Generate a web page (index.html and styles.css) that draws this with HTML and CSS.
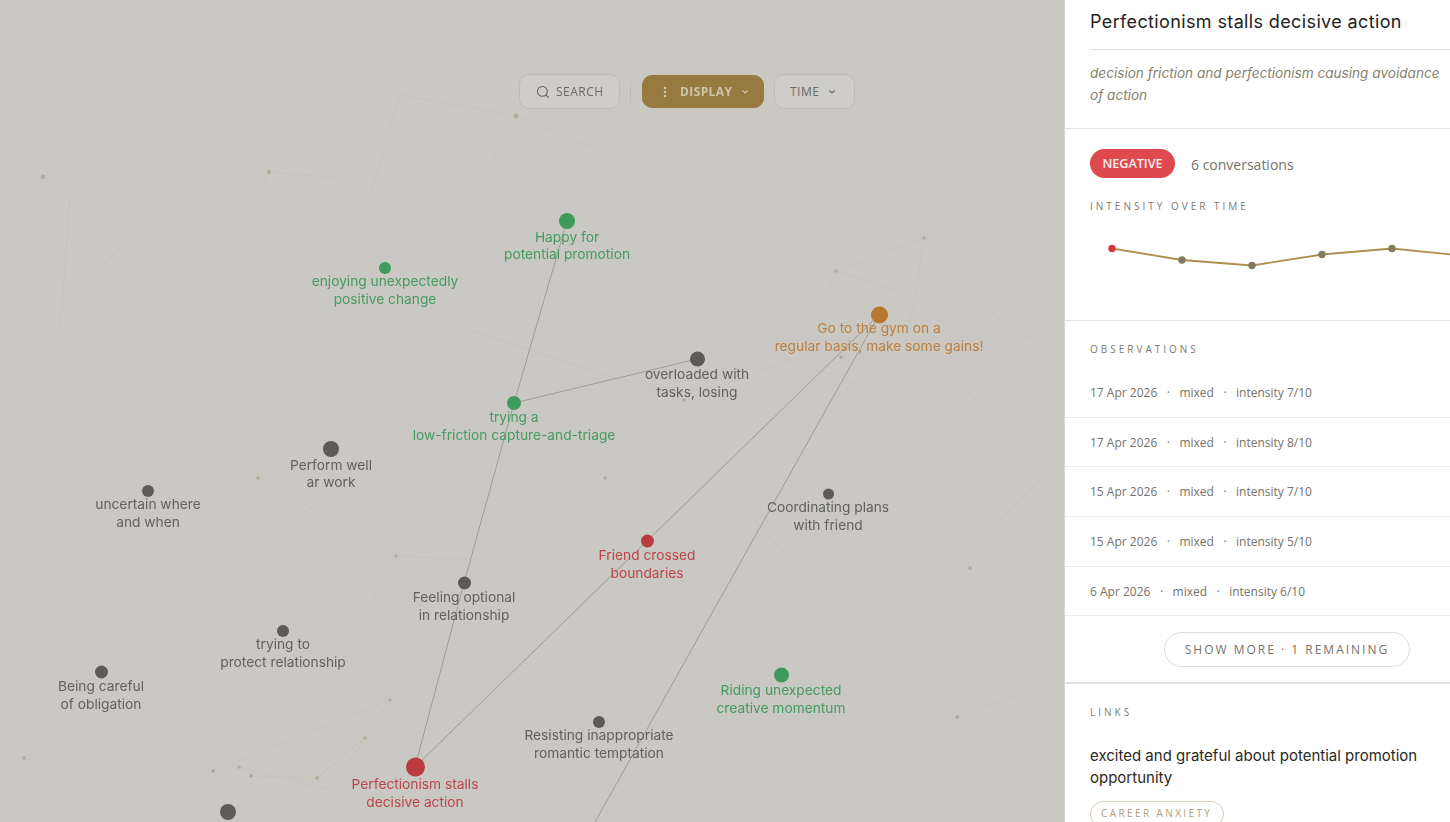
FILE: index.html
```html
<!DOCTYPE html>
<html lang="en">
<head>
<meta charset="utf-8">
<title>Perfectionism stalls decisive action</title>
<link rel="stylesheet" href="styles.css">
</head>
<body>
<div class="app">
  <main class="canvas">
    <svg class="graph" width="1064" height="822" viewBox="0 0 1064 822">
      <g class="faint">
        <path d="M43 177L120 250L60 300M43 177L170 110M269 172L340 178L372 190M269 172L262 190M269 172L180 120M516 116L470 200L400 240M516 116L600 150M516 116L400 95M400 95L372 190M70 200L60 330"/>
        <path d="M924 238L915 300L905 340M836 271L830 287M836 271L1010 330L1060 350M924 238L1000 320M836 271L924 238M924 238L880 270M905 340L1000 420L1050 470M841 357L950 430"/>
        <path d="M970 568L1000 520L1040 480M970 568L880 620M970 568L900 460M957 717L1030 690M957 717L880 770M396 556L480 560L605 478M258 478L396 556M605 478L684 400L790 360L860 385M258 478L190 430M396 556L350 640M684 400L560 360L470 330M340 380L258 478M720 480L790 560"/>
        <path d="M24 758L90 790M24 758L60 735L120 700M213 771L240 800M239 767L330 790M239 767L251 776L270 740M317 778L365 738L390 700M365 738L326 800M213 771L160 805M684 400L640 380M830 245L780 300M390 700L265 750L213 771M317 778L251 776M317 778L410 700"/>
        <path d="M630 100V222"/>
      </g>
      <g class="faint-dots">
        <circle cx="43" cy="177" r="2.200"/><circle cx="269" cy="172" r="2.200"/><circle cx="516" cy="116" r="2.400"/><circle cx="924" cy="238" r="1.800"/><circle cx="836" cy="271" r="1.800"/><circle cx="970" cy="568" r="1.800"/><circle cx="957" cy="717" r="1.800"/><circle cx="24" cy="758" r="1.800"/><circle cx="213" cy="771" r="1.800"/><circle cx="239" cy="767" r="1.800"/><circle cx="251" cy="776" r="1.800"/><circle cx="317" cy="778" r="1.800"/><circle cx="365" cy="738" r="1.800"/><circle cx="390" cy="700" r="1.800"/><circle cx="396" cy="556" r="1.800"/><circle cx="605" cy="478" r="1.800"/><circle cx="258" cy="478" r="1.800"/><circle cx="684" cy="400" r="1.800"/><circle cx="841" cy="357" r="1.800"/>
      </g>
      <g class="edges">
        <path d="M567 221L514 403L464 583L415 767"/>
        <path d="M514 403L697 359"/>
        <path d="M879 315L647 541L415 767"/>
        <path d="M879 315L595 822"/>
      </g>
    </svg>

    <nav class="toolbar">
      <button class="tool tool-search">
        <svg width="14" height="14" viewBox="0 0 14 14" class="tool-icon"><circle cx="6.400" cy="6.400" r="4.900"/><path d="M10 10L12.800 12.800"/></svg>
        SEARCH
      </button>
      <span class="tool-sep"></span>
      <button class="tool tool-display">
        <svg width="4" height="12" viewBox="0 0 4 12" class="dots"><circle cx="2" cy="2" r="1.300"/><circle cx="2" cy="6" r="1.300"/><circle cx="2" cy="10" r="1.300"/></svg>
        DISPLAY
        <svg width="8" height="6" viewBox="0 0 8 6" class="chev"><path d="M1.500 1.500L4 4L6.500 1.500"/></svg>
      </button>
      <button class="tool tool-time">
        TIME
        <svg width="8" height="6" viewBox="0 0 8 6" class="chev"><path d="M1.500 1.500L4 4L6.500 1.500"/></svg>
      </button>
    </nav>

    <div class="node green" style="left:567px;top:221px"><i class="d16"></i><span>Happy for<br>potential promotion</span></div>
    <div class="node green" style="left:385px;top:268px"><i class="d12"></i><span>enjoying unexpectedly<br>positive change</span></div>
    <div class="node orange" style="left:879px;top:315px"><i class="d17"></i><span>Go to the gym on a<br>regular basis, make some gains!</span></div>
    <div class="node gray" style="left:697px;top:359px"><i class="d15"></i><span>overloaded with<br>tasks, losing</span></div>
    <div class="node green" style="left:514px;top:403px"><i class="d14"></i><span>trying a<br>low-friction capture-and-triage</span></div>
    <div class="node gray" style="left:331px;top:449px"><i class="d16"></i><span>Perform well<br>ar work</span></div>
    <div class="node gray" style="left:148px;top:491px"><i class="d12"></i><span>uncertain where<br>and when</span></div>
    <div class="node gray" style="left:828px;top:494px"><i class="d11"></i><span>Coordinating plans<br>with friend</span></div>
    <div class="node red" style="left:647px;top:541px"><i class="d13"></i><span>Friend crossed<br>boundaries</span></div>
    <div class="node gray" style="left:464px;top:583px"><i class="d13"></i><span>Feeling optional<br>in relationship</span></div>
    <div class="node gray" style="left:283px;top:631px"><i class="d12"></i><span>trying to<br>protect relationship</span></div>
    <div class="node gray" style="left:101px;top:672px"><i class="d13"></i><span>Being careful<br>of obligation</span></div>
    <div class="node green" style="left:781px;top:675px"><i class="d15"></i><span>Riding unexpected<br>creative momentum</span></div>
    <div class="node gray" style="left:599px;top:722px"><i class="d12"></i><span>Resisting inappropriate<br>romantic temptation</span></div>
    <div class="node red" style="left:415px;top:767px"><i class="d19"></i><span>Perfectionism stalls<br>decisive action</span></div>
    <div class="node gray" style="left:228px;top:812px"><i class="d16"></i></div>
  </main>

  <aside class="panel">
    <section class="head">
      <h1>Perfectionism stalls decisive action</h1>
      <p>decision friction and perfectionism causing avoidance of action</p>
    </section>
    <section class="summary">
      <div class="meta"><span class="pill">NEGATIVE</span><span class="count">6 conversations</span></div>
      <h2>INTENSITY OVER TIME</h2>
      <svg class="chart" width="360" height="70" viewBox="0 0 360 70">
        <polyline points="22,17.500 92,29 162,34.500 232,23.500 302,17.500 372,24.500"/>
        <circle class="first" cx="22" cy="17.500" r="3.700"/>
        <circle cx="92" cy="29" r="3.700"/><circle cx="162" cy="34.500" r="3.700"/><circle cx="232" cy="23.500" r="3.700"/><circle cx="302" cy="17.500" r="3.700"/>
      </svg>
    </section>
    <section class="obs">
      <h2>OBSERVATIONS</h2>
      <ul>
        <li><span>17 Apr 2026</span><b>·</b><span>mixed</span><b>·</b><span>intensity 7/10</span></li>
        <li><span>17 Apr 2026</span><b>·</b><span>mixed</span><b>·</b><span>intensity 8/10</span></li>
        <li><span>15 Apr 2026</span><b>·</b><span>mixed</span><b>·</b><span>intensity 7/10</span></li>
        <li><span>15 Apr 2026</span><b>·</b><span>mixed</span><b>·</b><span>intensity 5/10</span></li>
        <li><span>6 Apr 2026</span><b>·</b><span>mixed</span><b>·</b><span>intensity 6/10</span></li>
      </ul>
      <div class="more-wrap"><button class="more">SHOW MORE · 1 REMAINING</button></div>
    </section>
    <section class="links">
      <h2>LINKS</h2>
      <p>excited and grateful about potential promotion opportunity</p>
      <span class="tag">CAREER ANXIETY</span>
    </section>
  </aside>
</div>
</body>
</html>
```
FILE: styles.css
```css
* { box-sizing: border-box; }
html, body { margin: 0; height: 100%; overflow: hidden; }
body { font-family: "Inter", "Liberation Sans", sans-serif; background: #fff; }
.app { display: flex; width: 1450px; height: 822px; overflow: hidden; }

.canvas { position: relative; width: 1064px; height: 822px; flex: none; background: #cac8c2; overflow: hidden; }
.graph { position: absolute; left: 0; top: 0; }
.faint { filter: blur(.6px); }
.faint path { fill: none; stroke: #bfbba2; stroke-width: 1; opacity: .3; }
.faint-dots { filter: blur(.7px); }
.faint-dots circle { fill: #b0ac97; }
.edges path { fill: none; stroke: #a09d92; stroke-width: 1; }

.toolbar { position: absolute; left: 519px; top: 74px; display: flex; align-items: center; gap: 10px; }
.tool { display: flex; align-items: center; height: 35px; border-radius: 10px; border: 1px solid #bdbcb7; background: #cfcdc9; color: #6b6a66; font-family: "Open Sans", sans-serif; font-size: 12px; letter-spacing: .5px; padding: 0; }
.tool-search { width: 101px; padding-left: 16px; gap: 6px; }
.tool-icon { fill: none; stroke: #66655f; stroke-width: 1.100; }
.tool-sep { width: 1px; height: 20px; background: #bdbbb5; }
.tool-display { width: 122px; height: 33px; margin-left: 1px; padding-left: 20px; background: #967a3f; border-color: #967a3f; color: #cdc5ae; font-weight: 700; letter-spacing: .4px; }
.tool-display .dots { fill: #cdc5ae; margin-right: 13px; }
.tool-display .chev { margin-left: 9px; stroke: #cdc5ae; }
.tool-time { width: 81px; padding-left: 15px; }
.tool-time .chev { margin-left: 9px; stroke: #6b6a66; }
.chev { fill: none; stroke-width: 1.100; }

.node { position: absolute; width: 0; height: 0; display: flex; flex-direction: column; align-items: center; }
.node i { flex: none; display: block; border-radius: 50%; background: currentColor; transform: translateY(-50%); }
.node span { position: absolute; white-space: nowrap; text-align: center; font-size: 13.750px; line-height: 17.800px; }
.d11 { width: 11px; height: 11px; }
.d12 { width: 12px; height: 12px; }
.d13 { width: 13px; height: 13px; }
.d14 { width: 14px; height: 14px; }
.d15 { width: 15px; height: 15px; }
.d16 { width: 16px; height: 16px; }
.d17 { width: 17px; height: 17px; }
.d19 { width: 19px; height: 19px; }
.d11 + span, .d12 + span, .d17 + span { top: 5px; }
.d13 + span, .d14 + span { top: 6px; }
.d15 + span { top: 7px; }
.d16 + span { top: 7.500px; }
.d19 + span { top: 9px; }
.green { color: #3f9a5c; }
.green span { color: #459b60; }
.gray { color: #5c5b57; }
.gray span { color: #62615d; }
.red { color: #bb3b40; }
.red span { color: #bc4449; }
.orange { color: #b9762d; }
.orange span { color: #bc8040; }

.panel { width: 386px; flex: none; height: 822px; overflow: hidden; background: #fff; border-left: 1px solid #d9d7d2; }
.panel section { padding-left: 25px; }
.panel h2 { margin: 0; font-family: "Open Sans", sans-serif; font-weight: 400; font-size: 10px; letter-spacing: 3px; line-height: 14px; color: #7d7a71; }

.head { height: 129px; border-bottom: 1px solid #e2e0dc; }
.head h1 { margin: 0; height: 50px; padding-top: 9px; font-size: 18px; font-weight: 400; letter-spacing: .37px; line-height: 25px; color: #24221d; border-bottom: 1px solid #e2e0dc; }
.head p { margin: 12px 0 0; font-size: 13.600px; line-height: 22px; font-style: italic; color: #85826f; }

.summary { height: 192px; padding-top: 19px; border-bottom: 1px solid #e2e0dc; }
.meta { display: flex; align-items: center; height: 30px; gap: 16px; }
.pill { width: 85px; height: 29px; border-radius: 15px; background: #de4a4e; color: #fbeeee; display: flex; align-items: center; justify-content: center; font-family: "Open Sans", sans-serif; font-size: 12.600px; font-weight: 600; }
.count { margin-top: 2px; font-family: "Open Sans", sans-serif; font-size: 14px; color: #76736a; }
.summary h2 { margin-top: 21px; }
.chart { display: block; margin: 18px 0 0 0; }
.chart polyline { fill: none; stroke: #b08f4e; stroke-width: 1.800; }
.chart circle { fill: #85795f; }
.chart .first { fill: #d8363c; }

.obs { padding-top: 21px; height: 363px; border-bottom: 2px solid #e4e2de; }
.obs ul { list-style: none; margin: 12px 0 0 -25px; padding: 0; }
.obs li { display: flex; align-items: center; height: 49.700px; padding-left: 25px; border-bottom: 1px solid #eeedea; font-family: "Open Sans", sans-serif; font-size: 12px; color: #76736a; }
.obs li b { font-weight: 400; margin: 0 9.500px; }
.more-wrap { padding: 16px 0 0 74px; }
.more { width: 246px; height: 35px; border-radius: 18px; border: 1px solid #dedcd7; background: #fff; font-family: "Open Sans", sans-serif; font-size: 12px; letter-spacing: 2px; color: #76736a; padding: 0; }

.links { padding-top: 21px; padding-right: 20px; }
.links p { margin: 26px 0 0; font-size: 15px; line-height: 22px; color: #2b2924; }
.tag { display: inline-block; margin-top: 12px; height: 26px; padding: 2px 11px 2px 10px; border: 1px solid #d6cdb4; border-radius: 13px; font-family: "Open Sans", sans-serif; font-size: 10px; letter-spacing: 2.400px; line-height: 18px; color: #ad9f78; }
```
